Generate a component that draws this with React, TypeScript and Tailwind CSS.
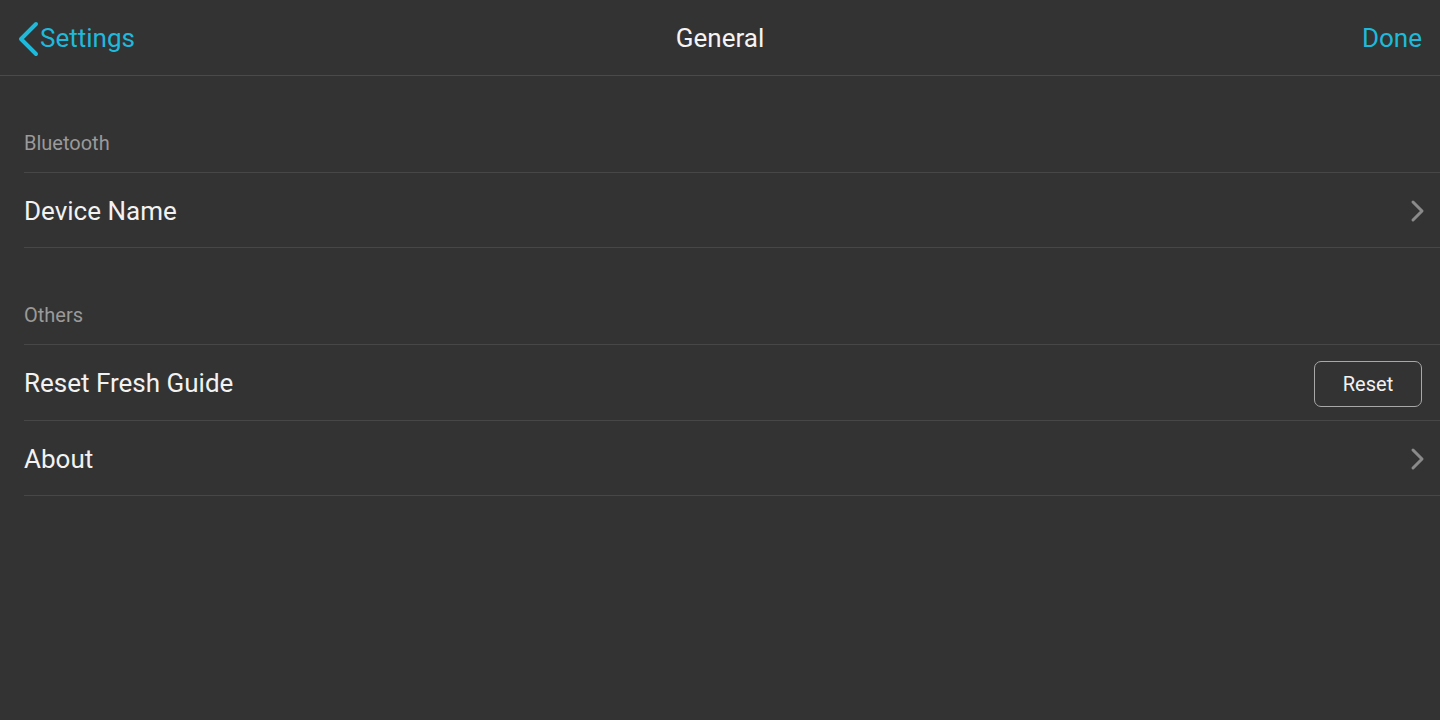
function SectionLabel({ label }: { label: string }) {
  return (
    <div className="h-[96px] flex items-end pl-6 pb-[14px]">
      <span className="text-[20px] text-[#9a9a9a]">{label}</span>
    </div>
  );
}

function Chevron() {
  return (
    <svg width="16" height="24" viewBox="0 0 16 24" className="-mr-[1px]">
      <path d="M4 3 L13 12 L4 21" fill="none" stroke="#8a8a8a" strokeWidth="3" strokeLinecap="round" strokeLinejoin="round" />
    </svg>
  );
}

function Row({ title, children, tall }: { title: string; children?: React.ReactNode; tall?: boolean }) {
  return (
    <div className={`ml-6 border-t border-[#474747] flex items-center justify-between pr-4 pt-[2px] ${tall ? 'h-[76px]' : 'h-[75px]'}`}>
      <span className="text-[26px] text-[#f2f2f2]">{title}</span>
      {children}
    </div>
  );
}

export default function App() {
  return (
    <div className="w-[1440px] h-[720px] bg-[#333333] overflow-hidden" style={{ fontFamily: 'Roboto, "Noto Sans", sans-serif' }}>
      {/* Nav bar */}
      <div className="relative h-[76px] border-b border-[#4a4a4a] flex items-center justify-between pl-4 pr-[18px] pt-[2px]">
        <button className="flex items-center text-[#1fb9dc] text-[26px]">
          <svg width="24" height="36" viewBox="0 0 24 36">
            <path d="M20 3 L5 18 L20 33" fill="none" stroke="#1fb9dc" strokeWidth="4" strokeLinecap="round" strokeLinejoin="round" />
          </svg>
          <span>Settings</span>
        </button>
        <span className="absolute left-1/2 top-[2px] bottom-0 flex items-center -translate-x-1/2 text-[26px] text-[#f4f4f4]">General</span>
        <button className="text-[26px] text-[#1fb9dc]">Done</button>
      </div>

      <SectionLabel label="Bluetooth" />
      <Row title="Device Name">
        <Chevron />
      </Row>
      <div className="ml-6 border-t border-[#474747]" />

      <SectionLabel label="Others" />
      <Row title="Reset Fresh Guide" tall>
        <button className="w-[108px] h-[46px] rounded-[7px] border border-[#a8a8a8] text-[20px] text-[#f2f2f2] mr-[2px]">
          Reset
        </button>
      </Row>
      <Row title="About">
        <Chevron />
      </Row>
      <div className="ml-6 border-t border-[#474747]" />
    </div>
  );
}
